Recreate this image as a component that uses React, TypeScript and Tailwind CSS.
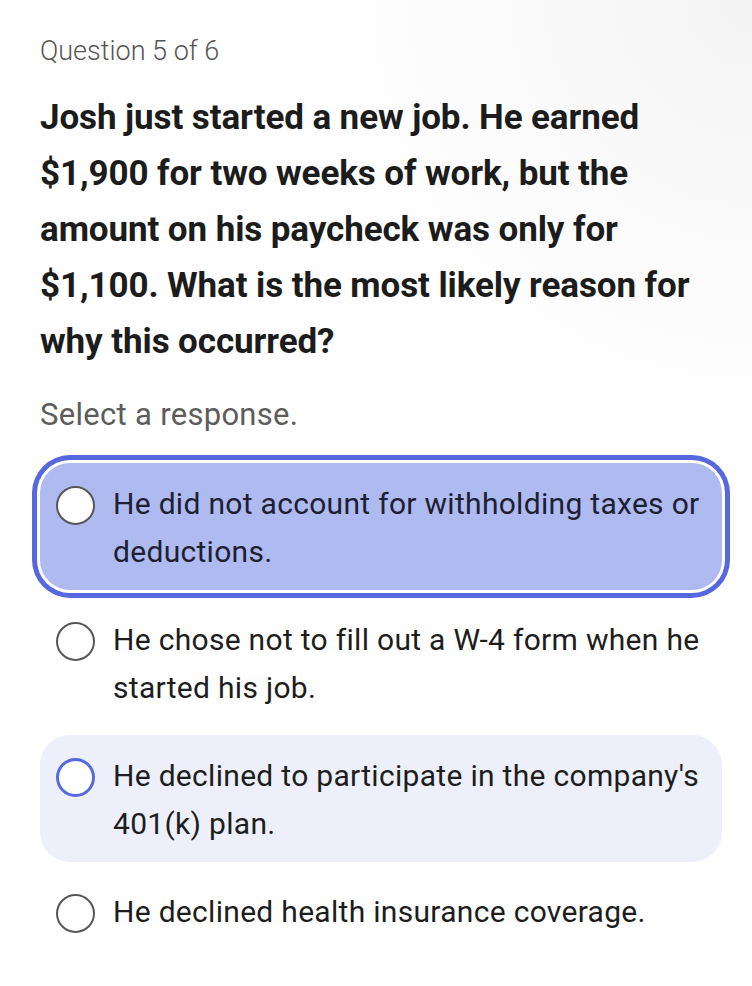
import { useState } from "react";

const question =
  "Josh just started a new job. He earned $1,900 for two weeks of work, but the amount on his paycheck was only for $1,100. What is the most likely reason for why this occurred?";

const answers = [
  "He did not account for withholding taxes or deductions.",
  "He chose not to fill out a W-4 form when he started his job.",
  "He declined to participate in the company's 401(k) plan.",
  "He declined health insurance coverage.",
];

function Radio({ active }: { active: boolean }) {
  return (
    <span
      className={
        active
          ? "mt-[6px] h-[39px] w-[39px] shrink-0 rounded-full border-[3px] border-[#5668dd] bg-white"
          : "mt-[6px] h-[39px] w-[39px] shrink-0 rounded-full border-2 border-[#575757] bg-white"
      }
    />
  );
}

export default function App() {
  const [selected] = useState(0);
  const hovered = 2;

  return (
    <div
      className="min-h-[986px] w-full bg-[radial-gradient(circle_at_100%_0%,#f4f4f4,#ffffff_35%)] pl-10 pr-[30px] pt-[33px] text-[#1d1d1d] [font-variant-ligatures:none]"
      style={{ fontFamily: "Roboto, 'Noto Sans', sans-serif" }}
    >
      <p className="text-[27px] leading-9 font-light text-[#555555]">Question 5 of 6</p>

      <h1 className="mt-[21px] text-[35px] leading-[56px] font-bold tracking-[-0.1px] text-[#1c1c1c]">
        {question}
      </h1>

      <p className="mt-[25px] text-[31px] leading-10 font-normal tracking-[0.3px] text-[#5c5c5c]">
        Select a response.
      </p>

      <ul className="mt-[28px] flex w-[682px] flex-col gap-[9px]">
        {answers.map((text, i) => {
          const isSelected = i === selected;
          const isHovered = i === hovered;
          return (
            <li
              key={text}
              className={
                isSelected
                  ? "flex gap-[18px] rounded-[30px] bg-[#aebaf0] pt-[17px] pr-2 pb-[14px] pl-4 text-[#1c2132] shadow-[0_0_0_3px_#ffffff,0_0_0_8px_#5668dd]"
                  : isHovered
                    ? "flex gap-[18px] rounded-[30px] bg-[#edf0fb] pt-[17px] pr-2 pb-[14px] pl-4"
                    : "flex gap-[18px] rounded-[30px] pt-[17px] pr-2 pb-[14px] pl-4"
              }
            >
              <Radio active={isHovered} />
              <span className="text-[30px] leading-[48px] font-normal tracking-[0.3px]">{text}</span>
            </li>
          );
        })}
      </ul>
    </div>
  );
}
